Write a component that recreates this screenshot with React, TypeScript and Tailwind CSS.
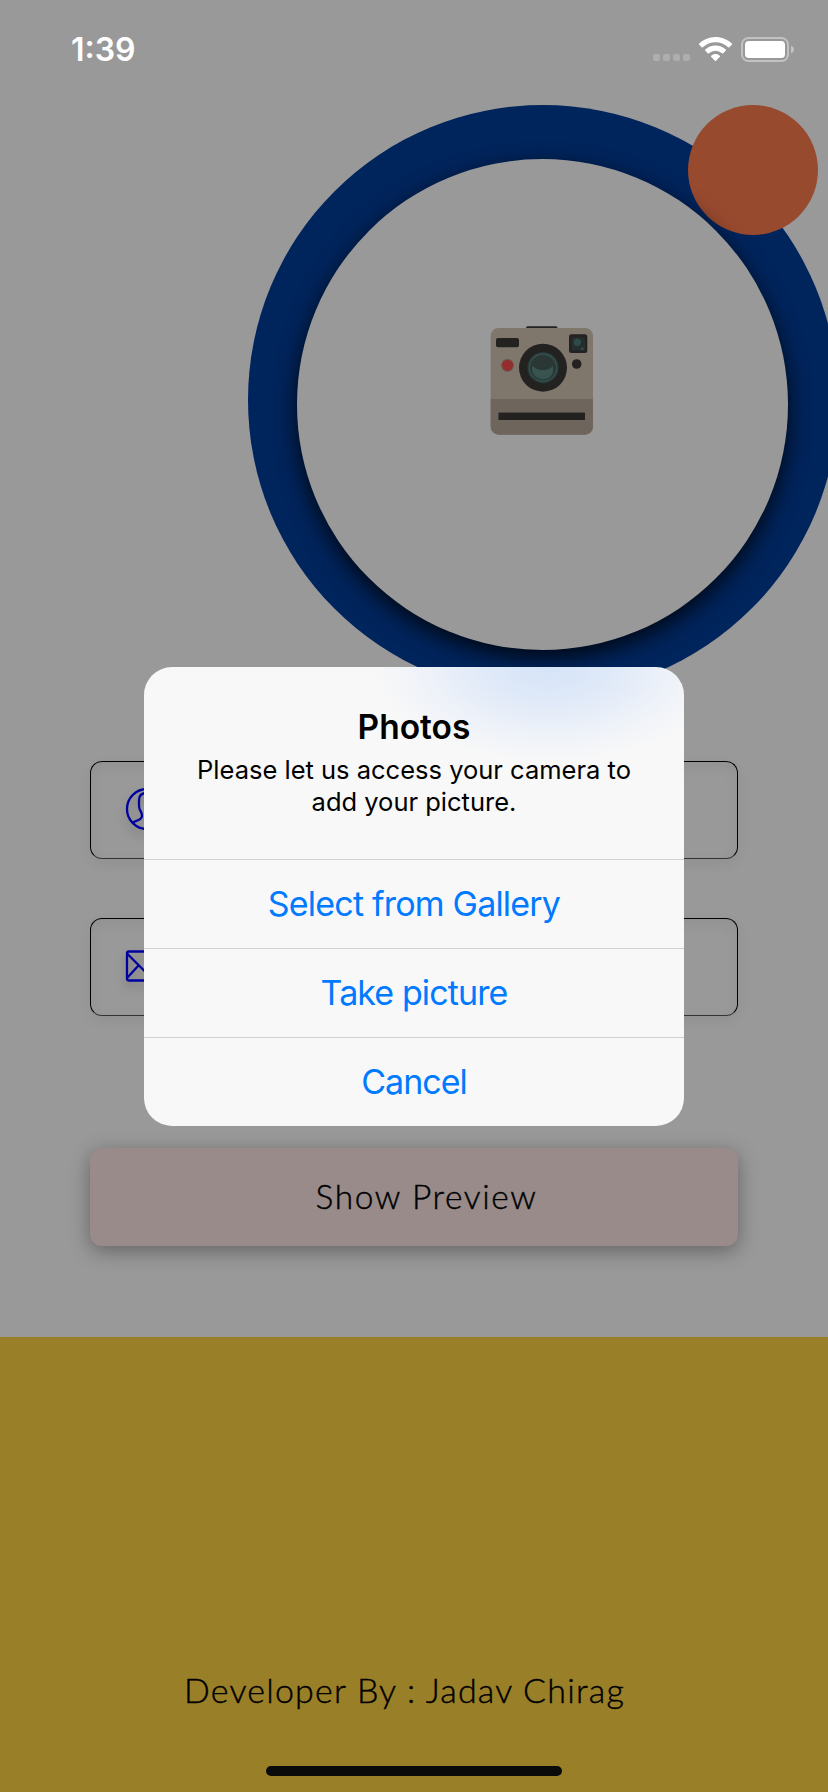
import React from "react";

function StatusBar() {
  return (
    <div className="flex h-[105px] w-full justify-between pl-[71px] pr-[33px]">
      <div className="pt-[30px] font-['Inter'] text-[32px] font-semibold leading-[40px] text-white">1:39</div>
      <svg className="mt-[34px] h-[32px] w-[145px]" viewBox="650 34 145 32" fill="none">
        <g fill="#aeaeae">
          <rect x="653" y="54" width="7" height="7" rx="2" />
          <rect x="663" y="54" width="7" height="7" rx="2" />
          <rect x="673" y="54" width="7" height="7" rx="2" />
          <rect x="683" y="54" width="7" height="7" rx="2" />
        </g>
        <g fill="#fff">
          <path d="M715.5 37c6.200 0 12 2.400 16.300 6.600.3.300.3.800 0 1.200l-2.500 2.500c-.3.300-.8.300-1.100 0a18.200 18.200 0 0 0-25.400 0c-.3.300-.8.300-1.100 0l-2.500-2.500c-.3-.4-.3-.9 0-1.200A23.300 23.300 0 0 1 715.500 37z" />
          <path d="M715.500 45.600c3.900 0 7.500 1.500 10.200 4 .4.300.4.900 0 1.200l-2.500 2.500c-.3.300-.8.300-1.100 0a9.800 9.800 0 0 0-13.200 0c-.3.300-.8.300-1.100 0l-2.500-2.500c-.4-.3-.4-.9 0-1.200 2.700-2.500 6.300-4 10.200-4z" />
          <path d="M715.500 54.100c1.700 0 3.200.6 4.300 1.600.4.300.4.800.1 1.100l-3.800 3.900c-.3.400-.9.400-1.200 0l-3.800-3.900c-.3-.3-.3-.8.100-1.100 1.100-1 2.600-1.600 4.300-1.600z" />
        </g>
        <rect x="742" y="38" width="46" height="23" rx="6.500" stroke="#c2c2c2" strokeWidth="2" />
        <rect x="745" y="41" width="40" height="17" rx="3.800" fill="#fff" />
        <path d="M791 45.500c1.800.7 3 2.200 3 4s-1.200 3.300-3 4z" fill="#c2c2c2" />
      </svg>
    </div>
  );
}

function CameraIcon() {
  return (
    <svg className="mr-[5px] h-[140px] w-[140px]" viewBox="0 0 140 140">
      <rect x="56" y="16.300" width="31.500" height="6" rx="1.500" fill="#242220" />
      <rect x="20.700" y="18" width="102.300" height="106.700" rx="8" fill="#7f776c" />
      <path d="M20.700 89H123v27.700a8 8 0 0 1-8 8H28.700a8 8 0 0 1-8-8z" fill="#6e655c" />
      <rect x="28.500" y="102.600" width="86.500" height="7.400" fill="#242220" />
      <rect x="26" y="28" width="23" height="9.200" rx="2" fill="#242220" />
      <rect x="99" y="24.300" width="18.300" height="18.700" rx="2.500" fill="#242220" />
      <rect x="101.500" y="27" width="13.500" height="13.500" rx="1.500" fill="#252e2d" />
      <circle cx="107.300" cy="32.300" r="3.600" fill="#2f4b4a" />
      <circle cx="112.300" cy="38.700" r="1.500" fill="#2f4b4a" />
      <circle cx="37.500" cy="55.300" r="6.600" fill="#6b625a" />
      <circle cx="37.500" cy="55.300" r="5.600" fill="#942d2d" />
      <circle cx="106.700" cy="54" r="4.800" fill="#242220" />
      <circle cx="73" cy="57.700" r="24" fill="#242220" />
      <circle cx="73" cy="57.700" r="15.700" fill="#263735" />
      <circle cx="73" cy="57.700" r="13.700" fill="#2a3735" stroke="#355150" strokeWidth="1.300" />
      <path d="M62 56.300c1.500.2 2.500 1 4 2.100 4.400 2.200 9.600 2.200 14 0 1.500-1.100 2.500-1.900 3-2.100C84.500 63.500 80 69.300 73 69.300S61 63.500 62 56.300z" fill="#395450" />
      <path d="M63 63.500a11.600 11.600 0 0 0 20 0" fill="none" stroke="#2f4946" strokeWidth="0.700" />
    </svg>
  );
}

function Avatar() {
  return (
    <div className="relative ml-[248px] h-[590px] w-[590px] shrink-0 rounded-full bg-[#00245c]">
      <div className="absolute left-[440px] top-0 h-[130px] w-[130px] rounded-full bg-[#984a2f]" />
      <div className="absolute left-[49px] top-[54px] flex h-[491px] w-[491px] justify-center rounded-full bg-[#999] pt-[151px] shadow-[0_8px_22px_0px_rgba(0,0,0,0.8)]">
        <CameraIcon />
      </div>
    </div>
  );
}

function Field({ children }: { children: React.ReactNode }) {
  return (
    <div className="flex h-[98px] w-[648px] items-center rounded-[12px] border border-black border-b-[#333] pl-[34px] pb-[3px] shadow-[0_5px_14px_rgba(0,0,0,0.06),inset_0_5px_14px_rgba(0,0,0,0.05)]">
      <svg className="h-[44px] w-[44px] drop-shadow-[0_6px_5px_rgba(0,0,0,0.2)]" viewBox="0 0 44 44" fill="none" stroke="#0000a0" strokeWidth="2.300" strokeLinejoin="round" strokeLinecap="round">
        {children}
      </svg>
    </div>
  );
}

function PhotosDialog() {
  const action = "flex h-[89px] items-center justify-center border-t border-[#d0d0d4] pb-px text-[34px] font-normal text-[#007aff]";
  return (
    <div className="absolute left-[144px] top-[667px] flex h-[459px] w-[540px] flex-col overflow-hidden rounded-[28px] bg-[#f8f8f8] bg-[radial-gradient(ellipse_175px_95px_at_405px_0px,#d5e4f8_0%,#dfe9f8_35%,#eef2f9_70%,#f8f8f8_100%)] font-['Inter'] text-black">
      <div className="flex h-[192px] flex-col items-center pt-[40px]">
        <h2 className="text-[33.500px] font-semibold leading-[40px]">Photos</h2>
        <p className="mt-[7px] whitespace-nowrap text-center text-[25.500px] leading-[32px]">
          <span className="block">Please let us access your camera to</span>
          <span className="block">add your picture.</span>
        </p>
      </div>
      <button className={action}><span className="tracking-[-0.8px]">Select from Gallery</span></button>
      <button className={action}><span className="tracking-[-0.9px]">Take picture</span></button>
      <button className={action}><span className="tracking-[-1px]">Cancel</span></button>
    </div>
  );
}

export default function App() {
  return (
    <main className="relative flex h-[1792px] w-[828px] flex-col overflow-hidden bg-[#999]">
      <StatusBar />
      <Avatar />
      <div className="mt-[66px] flex flex-col items-center gap-[59px]">
        <Field>
          <circle cx="22" cy="22" r="20" />
          <path d="M8 35.500c3-2 9-2.500 9-6.500 0-3-1-4-2-6-1-1.500-1-3-1-5v-5c0-5 3-7 8-7s8 2 8 7v5c0 2 0 3.500-1 5-1 2-2 3-2 6 0 4 6 4.500 9 6.500" />
        </Field>
        <Field>
          <rect x="2" y="7.500" width="40" height="29" rx="2" />
          <path d="M2.500 10L19 26.500c2 1.700 4 1.700 6 0L41.500 10M2.500 33.500l11-12M41.500 33.500l-11-12" />
        </Field>
      </div>
      <button className="ml-[90px] mt-[132px] h-[98px] w-[648px] shrink-0 rounded-[12px] bg-[#988b8a] pb-[2px] pl-[25px] font-['Lato'] text-[33.500px] font-light tracking-[1.600px] text-black shadow-[0_5px_20px_rgba(0,0,0,0.35)] [-webkit-text-stroke:0.4px_#000]">
        Show Preview
      </button>
      <footer className="mt-[91px] flex flex-1 flex-col bg-[#997f27] pt-[331px]">
        <div className="ml-[184px] whitespace-nowrap font-['Lato'] text-[34px] font-light leading-[44px] tracking-[1.200px] text-black [-webkit-text-stroke:0.4px_#000]">Developer By : Jadav Chirag</div>
        <div className="ml-[266px] mt-[54px] h-[10px] w-[296px] rounded-full bg-[#0a0a0a]" />
      </footer>
      <PhotosDialog />
    </main>
  );
}
